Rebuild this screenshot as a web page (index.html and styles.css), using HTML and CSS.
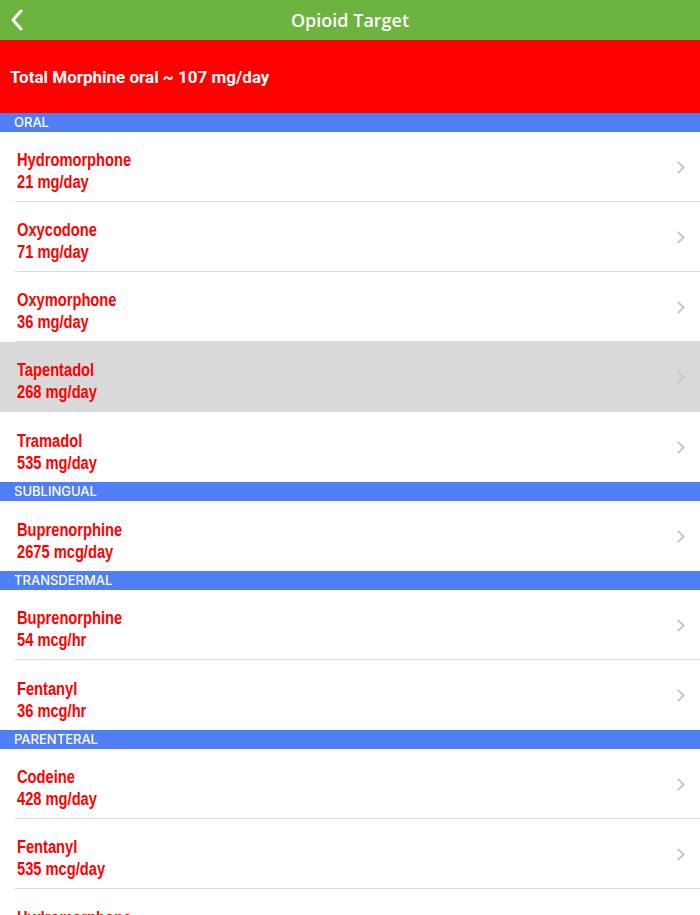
FILE: index.html
```html
<!doctype html>
<html lang="en">
  <head>
    <meta charset="UTF-8" />
    <meta name="viewport" content="width=device-width, initial-scale=1.0" />
    <title>Opioid Target</title>
    <link rel="stylesheet" href="styles.css">
  </head>
  <body>
    <header class="nav-bar">
      <button class="back-btn" aria-label="Back">
        <svg width="14" height="22" viewBox="0 0 14 22">
          <path d="M11 2 L3 11 L11 20" fill="none" stroke="#fff" stroke-width="3" stroke-linecap="round" stroke-linejoin="round" />
        </svg>
      </button>
      <h1>Opioid Target</h1>
    </header>

    <div class="total">Total Morphine oral ~ 107 mg/day</div>

    <div class="section">ORAL</div>
    <ul class="list">
      <li><div><b>Hydromorphone</b><span>21 mg/day</span></div></li>
      <li><div><b>Oxycodone</b><span>71 mg/day</span></div></li>
      <li><div><b>Oxymorphone</b><span>36 mg/day</span></div></li>
      <li class="selected"><div><b>Tapentadol</b><span>268 mg/day</span></div></li>
      <li><div><b>Tramadol</b><span>535 mg/day</span></div></li>
    </ul>

    <div class="section">SUBLINGUAL</div>
    <ul class="list">
      <li><div><b>Buprenorphine</b><span>2675 mcg/day</span></div></li>
    </ul>

    <div class="section">TRANSDERMAL</div>
    <ul class="list">
      <li><div><b>Buprenorphine</b><span>54 mcg/hr</span></div></li>
      <li><div><b>Fentanyl</b><span>36 mcg/hr</span></div></li>
    </ul>

    <div class="section">PARENTERAL</div>
    <ul class="list">
      <li><div><b>Codeine</b><span>428 mg/day</span></div></li>
      <li><div><b>Fentanyl</b><span>535 mcg/day</span></div></li>
      <li><div><b>Hydromorphone</b><span>7 mg/day</span></div></li>
    </ul>
  </body>
</html>
```

FILE: styles.css
```css
* {
  margin: 0;
  padding: 0;
  box-sizing: border-box;
}

body {
  font-family: "Open Sans", "Liberation Sans", sans-serif;
  background: #fff;
  overflow: hidden;
}

.nav-bar {
  height: 40px;
  background: #6db33f;
  display: flex;
  align-items: center;
  justify-content: center;
  position: relative;
}

.nav-bar h1 {
  color: #fff;
  font-size: 18px;
  font-weight: 600;
}

.back-btn {
  position: absolute;
  left: 10px;
  top: 9px;
  background: none;
  border: none;
  display: flex;
}

.total {
  height: 73px;
  background: #ff0000;
  color: #fff;
  font-family: Roboto, "Liberation Sans", sans-serif;
  font-size: 17px;
  font-weight: 700;
  display: flex;
  align-items: center;
  padding-left: 10px;
  padding-top: 1px;
}

.section {
  height: 19px;
  background: #4f7ef5;
  color: #fff;
  font-family: Inter, "Liberation Sans", sans-serif;
  font-size: 13px;
  font-weight: 500;
  line-height: 19px;
  padding-left: 14px;
}

.list {
  list-style: none;
}

.list li {
  height: 70px;
  padding-left: 15px;
  display: flex;
}

.list li div {
  flex: 1;
  display: flex;
  flex-direction: column;
  justify-content: center;
  padding: 9px 20px 0 2px;
  border-bottom: 1px solid #dcdcdc;
  position: relative;
  font-family: "Liberation Sans", Arial, sans-serif;
  color: #ff0000;
  font-size: 18px;
  line-height: 22px;
  font-weight: 700;
}

.list li div b,
.list li div span {
  display: block;
  transform: scaleX(0.815);
  transform-origin: left center;
  white-space: nowrap;
}

.list li:last-child div {
  border-bottom: none;
}

.list li div::after {
  content: "";
  position: absolute;
  right: 17px;
  top: 50%;
  width: 7px;
  height: 7px;
  margin-top: -4px;
  border-top: 2px solid #c7c7cc;
  border-right: 2px solid #c7c7cc;
  transform: rotate(45deg);
}

.list li.selected {
  background: #d9d9d9;
}

.list li.selected div {
  border-bottom-color: #d9d9d9;
}
```
